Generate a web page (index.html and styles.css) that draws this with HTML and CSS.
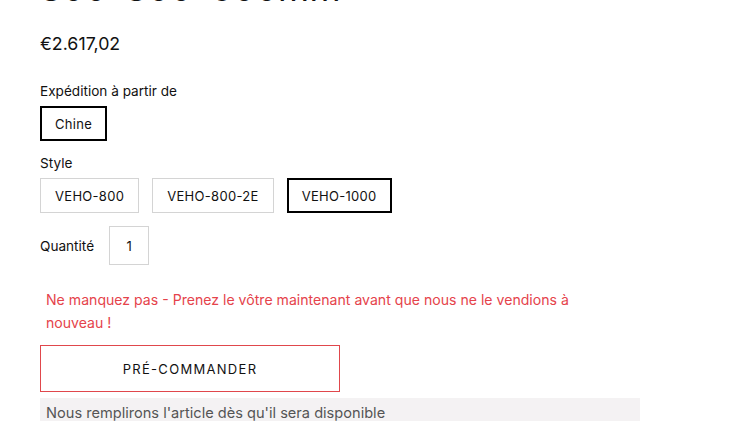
FILE: index.html
```html
<!DOCTYPE html>
<html lang="fr">
<head>
<meta charset="utf-8">
<link rel="stylesheet" href="styles.css">
</head>
<body>
<div class="product">
  <h1 class="title">800*800*600mm</h1>
  <div class="price">€2.617,02</div>
  <div class="option">
    <div class="label">Expédition à partir de</div>
    <div class="swatches">
      <span class="swatch selected">Chine</span>
    </div>
  </div>
  <div class="option">
    <div class="label">Style</div>
    <div class="swatches">
      <span class="swatch">VEHO-800</span>
      <span class="swatch">VEHO-800-2E</span>
      <span class="swatch selected">VEHO-1000</span>
    </div>
  </div>
  <div class="qty-row">
    <span class="qty-label">Quantité</span>
    <span class="qty-box">1</span>
  </div>
  <p class="notice">Ne manquez pas - Prenez le vôtre maintenant avant que nous ne le vendions à nouveau !</p>
  <button class="preorder">PRÉ-COMMANDER</button>
  <div class="info">Nous remplirons l'article dès qu'il sera disponible</div>
</div>
</body>
</html>
```
FILE: styles.css
```css
html, body {
  margin: 0;
  padding: 0;
  background: #fff;
  overflow: hidden;
}
body {
  font-family: Inter, "Liberation Sans", sans-serif;
  color: #111;
}
.product {
  width: 600px;
  padding-left: 40px;
  margin-top: -34px;
}
.title {
  margin: 0;
  font-size: 35.5px;
  font-weight: 400;
  line-height: 46px;
  letter-spacing: 0.2px;
}
.price {
  margin-top: 21px;
  font-size: 17.8px;
  line-height: 22px;
}
.option {
  margin-top: 27px;
}
.option + .option {
  margin-top: 13px;
}
.label {
  font-size: 13.6px;
  line-height: 18px;
}
.swatches {
  display: flex;
  gap: 13px;
  margin-top: 6px;
}
.swatch {
  box-sizing: border-box;
  height: 35px;
  padding: 0 14px;
  border: 1px solid #d4d4d4;
  font-size: 13px;
  letter-spacing: 0.3px;
  display: flex;
  align-items: center;
}
.swatch.selected {
  border: 2px solid #000;
  padding: 0 13px;
}
.qty-row {
  display: flex;
  align-items: center;
  gap: 15px;
  margin-top: 13px;
}
.qty-label {
  font-size: 13.6px;
}
.qty-box {
  box-sizing: border-box;
  width: 40px;
  height: 39px;
  border: 1px solid #d4d4d4;
  display: flex;
  align-items: center;
  justify-content: center;
  font-size: 13px;
}
.notice {
  margin: 23px 0 0;
  padding-left: 6px;
  color: #e5434b;
  font-size: 14.1px;
  line-height: 23px;
  width: 560px;
}
.preorder {
  display: block;
  box-sizing: border-box;
  margin-top: 11px;
  width: 300px;
  height: 47px;
  background: #fff;
  border: 1px solid #e0474c;
  font-family: inherit;
  font-size: 13px;
  letter-spacing: 1.3px;
  color: #111;
}
.info {
  margin-top: 6px;
  background: #f4f2f3;
  padding: 6px 6px;
  color: #555;
  font-size: 14.6px;
  line-height: 18px;
}
```
